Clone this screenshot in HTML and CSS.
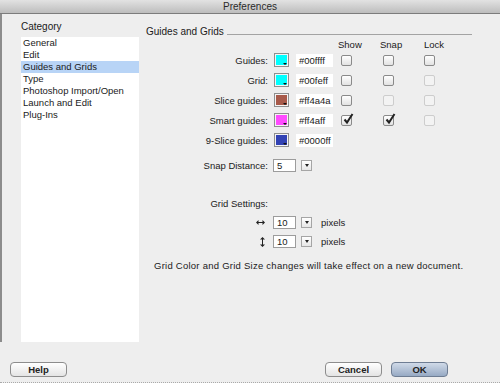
FILE: index.html
```html
<!DOCTYPE html>
<html lang="en">
<head>
    <meta charset="UTF-8">
    <title>Preferences</title>
    <link rel="stylesheet" href="styles.css">
</head>
<body>
    <div class="window">
        <div class="titlebar">Preferences</div>
        <div class="main">
            <div class="sidebar">
                <div class="side-title">Category</div>
                <ul class="cat-list">
                    <li>General</li>
                    <li>Edit</li>
                    <li class="selected">Guides and Grids</li>
                    <li>Type</li>
                    <li>Photoshop Import/Open</li>
                    <li>Launch and Edit</li>
                    <li>Plug-Ins</li>
                </ul>
            </div>
            <div class="panel">
                <div class="panel-head"><span>Guides and Grids</span><span class="rule"></span></div>

                <div class="color-grid">
                    <span></span><span></span><span></span>
                    <span class="col-head">Show</span>
                    <span class="col-head">Snap</span>
                    <span class="col-head lock">Lock</span>

                    <span class="lbl">Guides:</span>
                    <span class="swatch"><i class="sw-cyan"></i></span>
                    <span class="hex">#00ffff</span>
                    <span class="check"></span>
                    <span class="check"></span>
                    <span class="check"></span>

                    <span class="lbl">Grid:</span>
                    <span class="swatch"><i class="sw-cyan"></i></span>
                    <span class="hex">#00feff</span>
                    <span class="check"></span>
                    <span class="check"></span>
                    <span class="check disabled"></span>

                    <span class="lbl">Slice guides:</span>
                    <span class="swatch"><i class="sw-brown"></i></span>
                    <span class="hex">#ff4a4a</span>
                    <span class="check"></span>
                    <span class="check disabled"></span>
                    <span class="check disabled"></span>

                    <span class="lbl">Smart guides:</span>
                    <span class="swatch"><i class="sw-magenta"></i></span>
                    <span class="hex">#ff4aff</span>
                    <span class="check checked"><svg width="12" height="12" viewBox="0 0 12 12"><path d="M2.5 6.5 L5 9.5 L10.5 1" fill="none" stroke="#222" stroke-width="2"/></svg></span>
                    <span class="check checked"><svg width="12" height="12" viewBox="0 0 12 12"><path d="M2.5 6.5 L5 9.5 L10.5 1" fill="none" stroke="#222" stroke-width="2"/></svg></span>
                    <span class="check disabled"></span>

                    <span class="lbl">9-Slice guides:</span>
                    <span class="swatch"><i class="sw-blue"></i></span>
                    <span class="hex">#0000ff</span>
                    <span></span><span></span><span></span>
                </div>

                <div class="field-row snap-row">
                    <span class="lbl">Snap Distance:</span>
                    <span class="num">5</span>
                    <span class="drop"></span>
                </div>

                <div class="field-row settings-row">
                    <span class="lbl settings-lbl">Grid Settings:</span>
                </div>
                <div class="field-row">
                    <span class="lbl arrow"><svg width="9" height="5" viewBox="0 0 9 5"><path d="M0 2.5 L2.5 0 V5 Z M9 2.5 L6.5 0 V5 Z" fill="#222"/><path d="M2 2.5 H7" stroke="#222" stroke-width="1"/></svg></span>
                    <span class="num">10</span>
                    <span class="drop"></span>
                    <span class="unit">pixels</span>
                </div>
                <div class="field-row">
                    <span class="lbl arrow"><svg width="5" height="10" viewBox="0 0 5 10"><path d="M2.5 0 L0 2.5 H5 Z M2.5 10 L0 7.5 H5 Z" fill="#222"/><path d="M2.5 2 V8" stroke="#222" stroke-width="1"/></svg></span>
                    <span class="num">10</span>
                    <span class="drop"></span>
                    <span class="unit">pixels</span>
                </div>

                <p class="note">Grid Color and Grid Size changes will take effect on a new document.</p>
            </div>
        </div>
        <div class="footer">
            <button class="btn">Help</button>
            <div class="footer-right">
                <button class="btn">Cancel</button>
                <button class="btn default">OK</button>
            </div>
        </div>
    </div>
</body>
</html>
```

FILE: styles.css
```css
body {
    margin: 0;
    font-family: "Liberation Sans", Arial, sans-serif;
    font-size: 9.5px;
    color: #1a1a1a;
}
.window {
    width: 500px;
    height: 383px;
    background: #eeeeee;
    box-sizing: border-box;
    border-bottom: 1px dotted #a9a9a9;
    overflow: hidden;
}
.titlebar {
    height: 13px;
    line-height: 13px;
    text-align: center;
    font-size: 10px;
    color: #2a2a2a;
    background: linear-gradient(#e2e2e2, #bdbdbd);
    border-bottom: 1px solid #7c7c7c;
}
.main {
    display: flex;
    height: 328px;
    border-left: 2px solid #8c8c8c;
}
.sidebar {
    width: 118px;
    padding-left: 19px;
}
.side-title {
    margin-top: 7px;
    height: 12px;
    line-height: 12px;
    font-size: 10px;
    margin-bottom: 4px;
}
.cat-list {
    list-style: none;
    margin: 0;
    padding: 0;
    height: 305px;
    background: #fff;
}
.cat-list li {
    height: 12px;
    line-height: 12px;
    padding-left: 2px;
}
.cat-list li.selected {
    background: #b8d4f6;
}
.panel {
    width: 326px;
    margin-left: 7px;
    padding-top: 12px;
}
.panel-head {
    display: flex;
    align-items: flex-end;
    height: 12px;
    line-height: 12px;
    font-size: 10px;
}
.rule {
    flex: 1;
    height: 1px;
    background: #a3a3a3;
    margin: 0 0 3px 3px;
}
.color-grid {
    display: grid;
    grid-template-columns: 124px 26px 40px 42px 41px 31px;
    grid-template-rows: 12px repeat(5, 20px);
    align-items: center;
}
.col-head {
    padding-left: 2px;
}
.col-head.lock {
    padding-left: 5px;
}
.lbl {
    text-align: right;
    padding-right: 2px;
}
.swatch {
    position: relative;
    width: 13px;
    height: 12px;
    margin-left: 4px;
    border: 1px solid #8f8f8f;
    background: #f4f4f4;
    display: flex;
}
.swatch i {
    flex: 1;
    margin: 1px;
}
.swatch::after {
    content: "";
    position: absolute;
    right: 1px;
    bottom: 1px;
    border-left: 2px solid transparent;
    border-right: 2px solid transparent;
    border-top: 2px solid #111;
}
.sw-cyan { background: #00ffff; }
.sw-brown { background: #a85a4a; }
.sw-magenta { background: #ff4aff; }
.sw-blue { background: #3242b4; }
.hex {
    width: 34px;
    height: 13px;
    line-height: 13px;
    padding-left: 3px;
    background: #fff;
}
.check {
    position: relative;
    width: 9px;
    height: 9px;
    margin-left: 5px;
    border: 1px solid #8a8a8a;
    border-radius: 2px;
    background: linear-gradient(#ffffff, #e2e2e2);
}
.check.disabled {
    border-color: #cdcdcd;
    background: #f3f3f3;
}
.check svg {
    position: absolute;
    left: 0;
    top: -3px;
}
.field-row {
    display: flex;
    align-items: center;
    height: 19px;
}
.field-row .lbl {
    width: 122px;
}
.snap-row {
    margin-top: 5px;
    height: 20px;
}
.settings-row {
    margin-top: 19px;
}
.settings-lbl {
    padding-right: 0;
    margin-right: -1px;
}
.arrow {
    display: flex;
    justify-content: flex-end;
    padding-right: 5px;
}
.field-row .arrow {
    width: 119px;
}
.num {
    width: 18px;
    height: 11px;
    line-height: 11px;
    margin-left: 3px;
    padding-left: 3px;
    border: 1px solid #9c9c9c;
    background: #fff;
}
.drop {
    width: 9px;
    height: 9px;
    margin-left: 5px;
    border: 1px solid #a5a5a5;
    background: linear-gradient(#ffffff, #e6e6e6);
    display: flex;
    align-items: center;
    justify-content: center;
}
.drop::after {
    content: "";
    border-left: 2px solid transparent;
    border-right: 2px solid transparent;
    border-top: 3px solid #222;
}
.unit {
    margin-left: 9px;
}
.note {
    margin: 9px 0 0 8px;
    line-height: 12px;
    letter-spacing: 0.25px;
}
.footer {
    display: flex;
    justify-content: space-between;
    padding: 20px 52px 0 10px;
}
.footer-right {
    display: flex;
    gap: 9px;
}
.btn {
    width: 57px;
    height: 15px;
    padding: 0;
    font-family: "Liberation Sans", Arial, sans-serif;
    font-size: 9.5px;
    font-weight: bold;
    color: #222;
    border: 1px solid #8d8d8d;
    border-radius: 4px;
    background: linear-gradient(#ffffff, #e4e4e4);
}
.btn.default {
    border-color: #6e7d93;
    background: linear-gradient(#d0dae8, #97aac4);
}
```
